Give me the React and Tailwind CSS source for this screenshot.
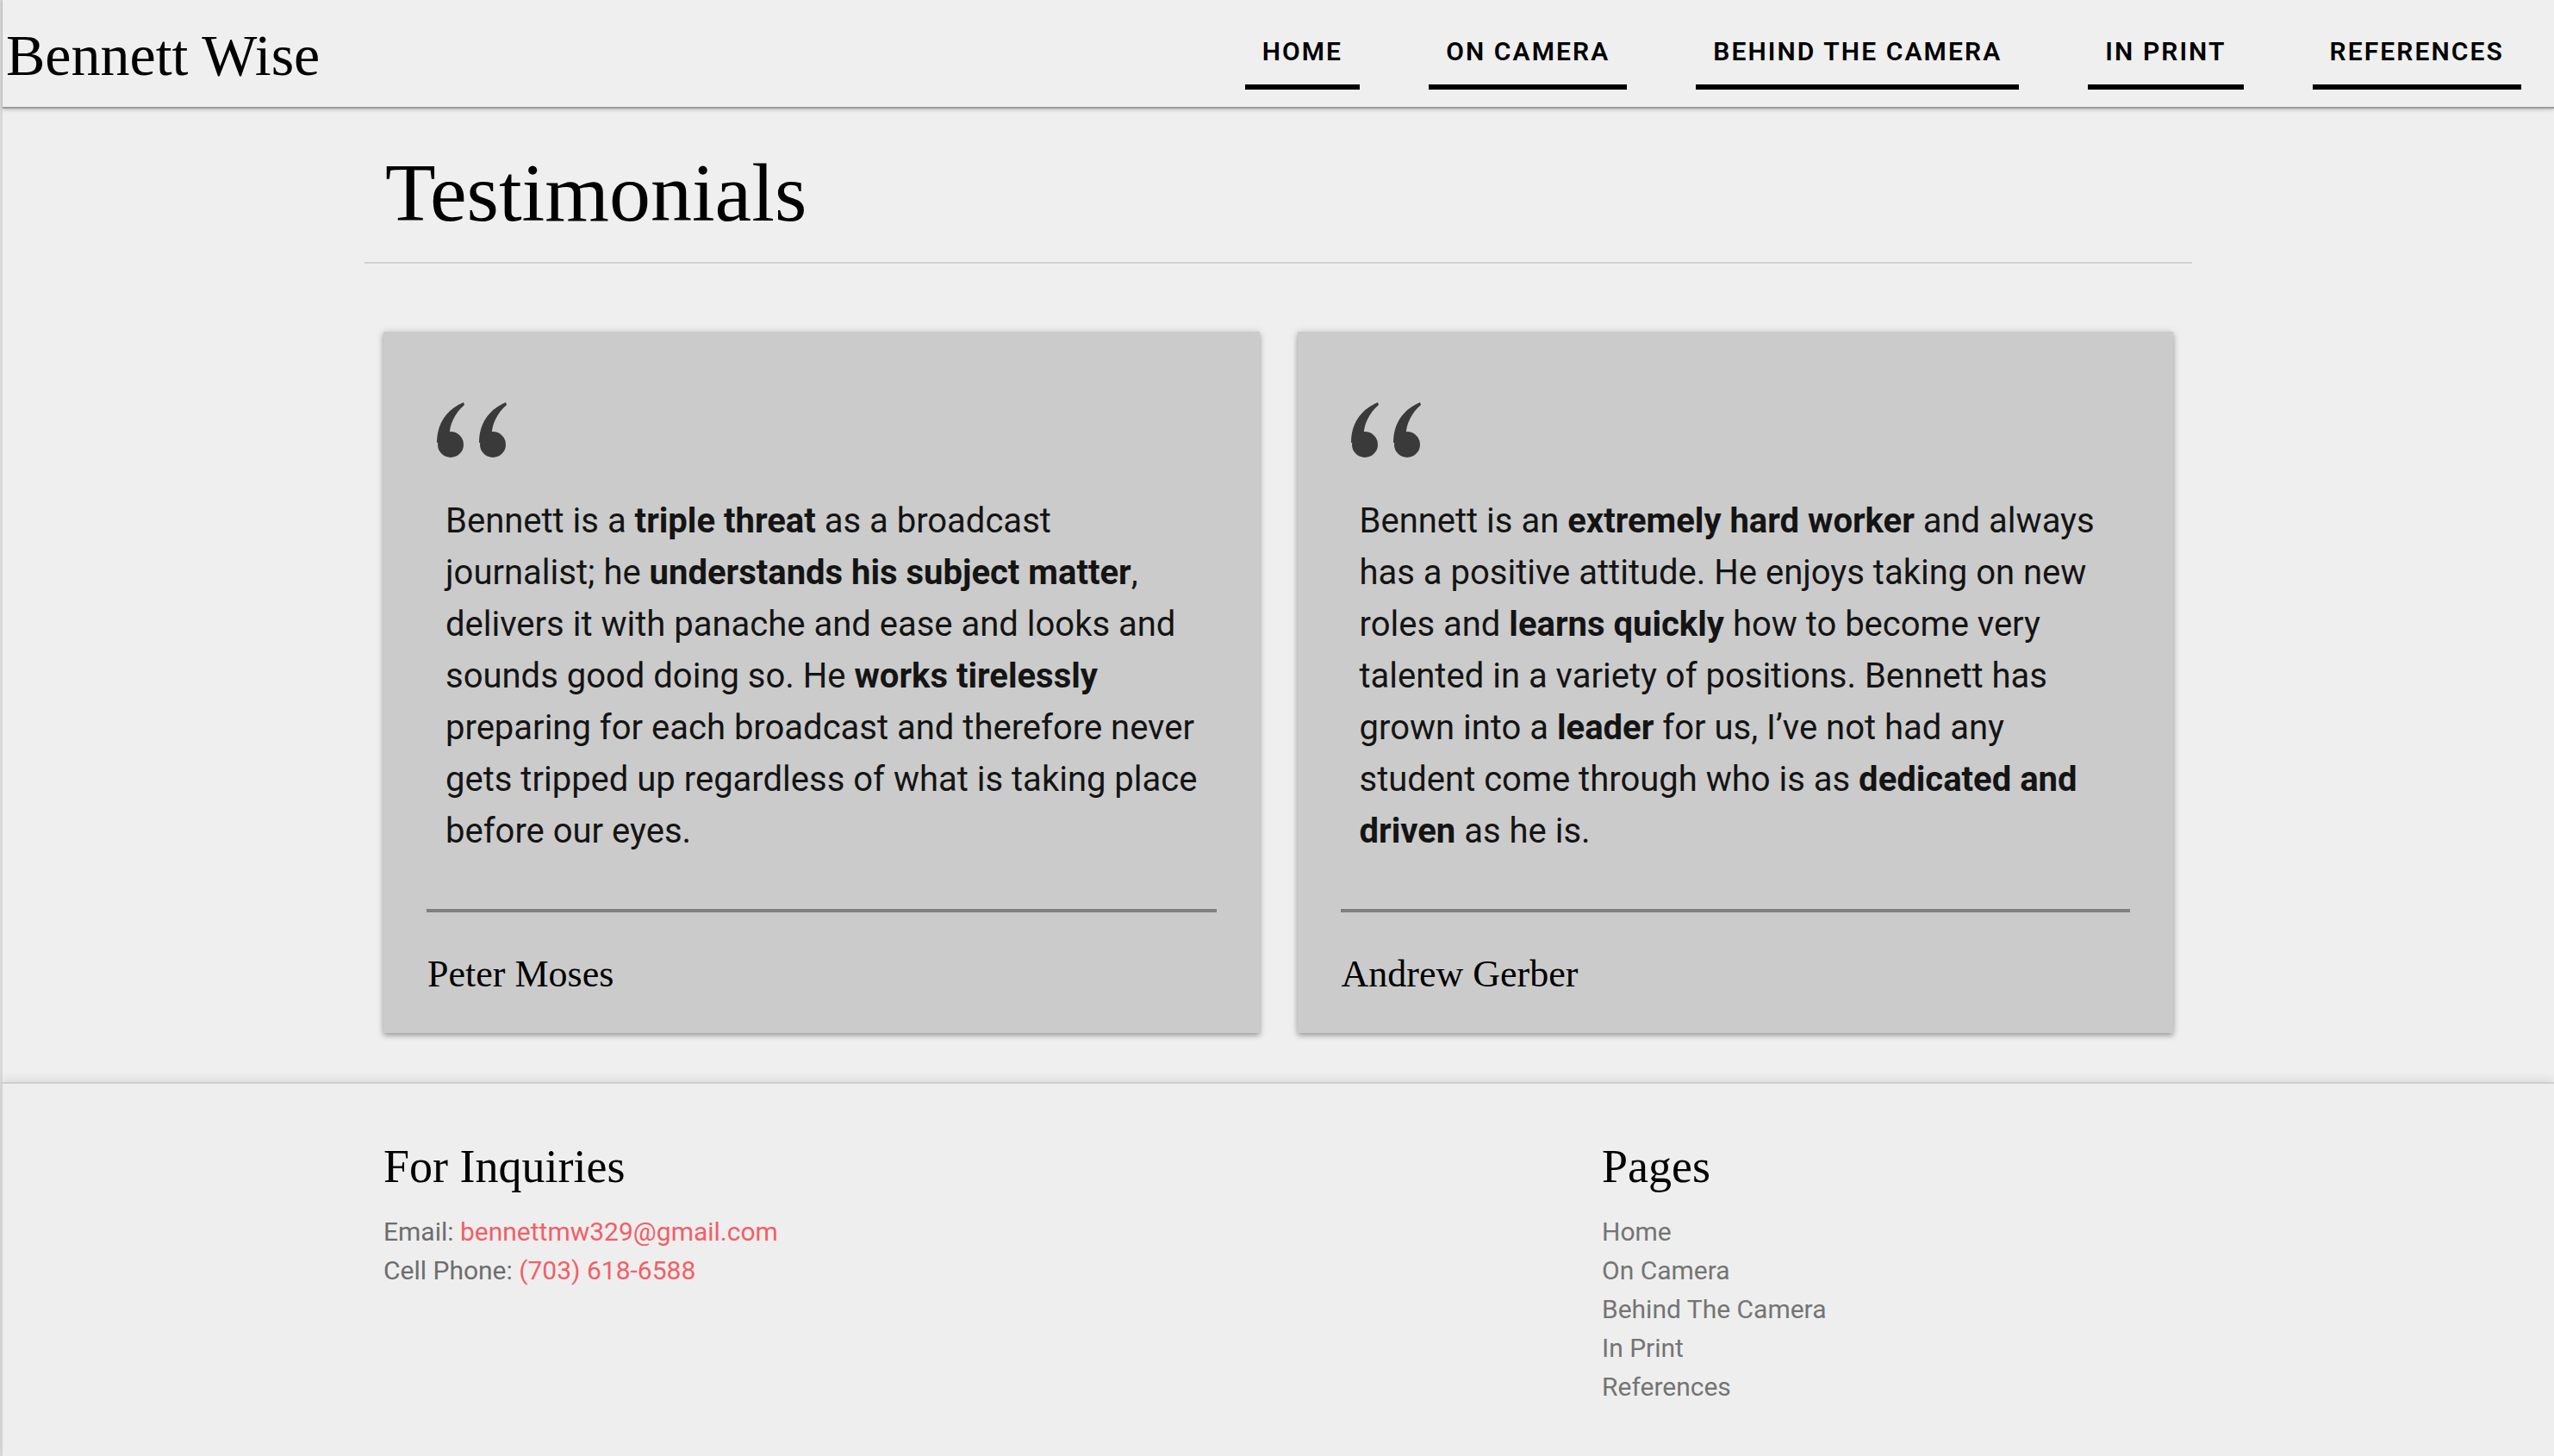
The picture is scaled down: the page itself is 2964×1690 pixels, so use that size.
import React from "react";

const navItems = ["HOME", "ON CAMERA", "BEHIND THE CAMERA", "IN PRINT", "REFERENCES"];
const pages = ["Home", "On Camera", "Behind The Camera", "In Print", "References"];

const serif = "font-['Liberation_Serif','Times_New_Roman',serif]";

const QuoteMark = () => (
  <svg width="87" height="64" viewBox="0 0 87 64" className="block">
    <g fill="#3a3a3a">
      <path d="M36 0 C17 8 5 24 5 47 L20 44 C18 30 24 14 37 3 Z" />
      <circle cx="21" cy="49" r="15" />
      <path d="M85 0 C66 8 54 24 54 47 L69 44 C67 30 73 14 86 3 Z" />
      <circle cx="70" cy="49" r="15" />
    </g>
  </svg>
);

const Card = ({ children, name }) => (
  <div className="bg-[#cbcbcb] pt-[82px] pb-[46px] shadow-[0_3px_6px_rgba(0,0,0,0.3),0_0_10px_rgba(0,0,0,0.1)]">
    <div className="ml-[57px]">
      <QuoteMark />
    </div>
    <p className="mt-[44px] pl-[72px] w-[948px] text-[40px] leading-[60px] text-[#141414]">
      {children}
    </p>
    <div className="mt-[60px] mx-[50px] h-[4px] bg-[#808080]" />
    <div className={`mt-[50px] ml-[51px] text-[44px] leading-[44px] text-black ${serif}`}>
      {name}
    </div>
  </div>
);

export default function App() {
  return (
    <div className="min-h-screen bg-[#efefef] border-l-[3px] border-[#d9d9d9] font-['Roboto','Liberation_Sans',sans-serif]">
      {/* header */}
      <header className="h-[126px] flex items-start justify-between pl-[4px] pr-[38px] border-b-2 border-[#9c9c9c] shadow-[0_1px_4px_rgba(0,0,0,0.25)]">
        <div className={`mt-[30px] text-[68px] leading-[68px] text-black ${serif}`}>Bennett Wise</div>
        <nav className="flex gap-[80px]">
          {navItems.map((item) => (
            <a key={item} href="#" className="pt-[42px] flex flex-col">
              <span className="px-[20px] text-[30px] leading-[36px] font-semibold tracking-[2.1px] text-black">
                {item}
              </span>
              <span className="mt-[20px] h-[6px] bg-black" />
            </a>
          ))}
        </nav>
      </header>

      {/* testimonials */}
      <main className="w-[2121px] mx-auto pb-[57px]">
        <div className="pt-[50px] pb-[33px] pl-[24px] border-b-2 border-[#d2d2d2]">
          <h1 className={`text-[96px] leading-[95px] text-black ${serif}`}>Testimonials</h1>
        </div>
        <div className="grid grid-cols-2 gap-[44px] px-[22px] mt-[79px]">
          <Card name="Peter Moses">
            Bennett is a <b className="font-bold">triple threat</b> as a broadcast journalist; he{" "}
            <b className="font-bold">understands his subject matter</b>, delivers it with panache and
            ease and looks and sounds good doing so. He <b className="font-bold">works tirelessly</b>{" "}
            preparing for each broadcast and therefore never gets tripped up regardless of what is
            taking place before our eyes.
          </Card>
          <Card name="Andrew Gerber">
            Bennett is an <b className="font-bold">extremely hard worker</b> and always has a positive
            attitude. He enjoys taking on new roles and <b className="font-bold">learns quickly</b> how
            to become very talented in a variety of positions. Bennett has grown into a{" "}
            <b className="font-bold">leader</b> for us, I’ve not had any student come through who is as{" "}
            <b className="font-bold">dedicated and driven</b> as he is.
          </Card>
        </div>
      </main>

      {/* footer */}
      <footer className="bg-[#eeeeee] border-t-2 border-[#cfcfcf] shadow-[0_-4px_10px_rgba(0,0,0,0.08)] pt-[69px] pb-[58px]">
        <div className="w-[2121px] mx-auto grid grid-cols-12">
          <div className="col-span-8 px-[22px]">
            <h3 className={`text-[54px] leading-[54px] text-black ${serif}`}>For Inquiries</h3>
            <div className="mt-[26px] text-[30px] leading-[45px] text-[#6d6d6d]">
              <p>
                Email: <a href="#" className="text-[#f25f66]">bennettmw329@gmail.com</a>
              </p>
              <p>
                Cell Phone: <a href="#" className="text-[#f25f66]">(703) 618-6588</a>
              </p>
            </div>
          </div>
          <div className="col-span-4 px-[22px]">
            <h3 className={`text-[54px] leading-[54px] text-black ${serif}`}>Pages</h3>
            <ul className="mt-[26px] text-[30px] leading-[45px] text-[#747474]">
              {pages.map((p) => (
                <li key={p}>
                  <a href="#">{p}</a>
                </li>
              ))}
            </ul>
          </div>
        </div>
      </footer>
    </div>
  );
}
